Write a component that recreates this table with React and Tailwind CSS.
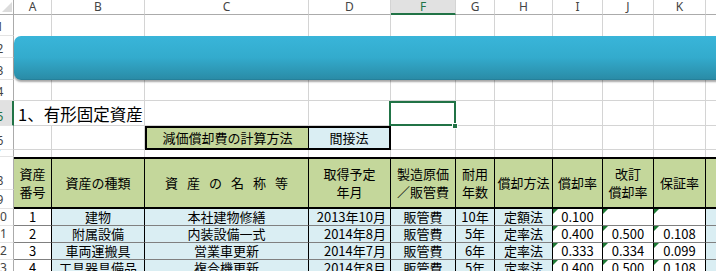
import React from 'react';

// Column widths of the sheet (column E is hidden)
const W = {
  A: 'w-[38px]',
  B: 'w-[93px]',
  C: 'w-[164px]',
  D: 'w-[82px]',
  F: 'w-[65px]',
  G: 'w-[39px]',
  H: 'w-[58px]',
  I: 'w-[50px]',
  J: 'w-[51px]',
  K: 'w-[52px]',
  L: 'w-[80px]',
};
const KEYS = ['A', 'B', 'C', 'D', 'F', 'G', 'H', 'I', 'J', 'K', 'L'];

const DATA = [
  ['1', '建物', '本社建物修繕', '2013年10月', '販管費', '10年', '定額法', '0.100', '', ''],
  ['2', '附属設備', '内装設備一式', '2014年8月', '販管費', '5年', '定率法', '0.400', '0.500', '0.108'],
  ['3', '車両運搬具', '営業車更新', '2014年7月', '販管費', '6年', '定率法', '0.333', '0.334', '0.099'],
  ['4', '工具器具備品', '複合機更新', '2014年8月', '販管費', '5年', '定率法', '0.400', '0.500', '0.108'],
];

function RowHead({ label, h, active }) {
  return (
    <div
      className={`${h} w-[14px] shrink-0 overflow-hidden flex items-end border-b border-b-[#e3e3e3] ${
        active
          ? 'border-r-2 border-r-[#217346] bg-[#e1e1e1] text-[#217346]'
          : 'border-r border-r-[#ababab] bg-white text-[#444]'
      }`}
    >
      <div className="w-[26px] -ml-[13px] shrink-0 text-center text-[12px] leading-[13px] pb-[2px] font-['Noto_Sans',sans-serif]">
        {label}
      </div>
    </div>
  );
}

function Blank({ k, bottom = true }) {
  return (
    <div
      className={`${W[k]} h-full shrink-0 border-r border-[#d4d4d4] ${bottom ? 'border-b' : ''}`}
    />
  );
}

function ErrorMark() {
  return (
    <span className="absolute left-0 top-0 w-0 h-0 border-t-[5px] border-r-[5px] border-t-[#1e7a35] border-r-transparent" />
  );
}

export default function App() {
  return (
    <div className="w-[716px] h-[271px] overflow-hidden bg-white text-black font-['Noto_Sans_CJK_JP',sans-serif]">
      {/* column letters */}
      <div className="flex h-[15px]">
        <div className="w-[14px] h-full shrink-0 border-r border-b border-[#ababab] relative overflow-hidden">
          <svg className="absolute left-[2px] top-[2px]" width="10" height="10" viewBox="0 0 10 10">
            <polygon points="10,0 10,10 0,10" fill="#dcdcdc" />
          </svg>
        </div>
        {KEYS.map((k) =>
          k === 'F' ? (
            <div
              key={k}
              className={`${W[k]} h-full shrink-0 bg-[#e1e1e1] border-r border-r-[#d4d4d4] border-b-2 border-b-[#217346] text-[#217346] flex items-center justify-center text-[12px] leading-[13px] font-['Noto_Sans',sans-serif]`}
            >
              {k}
            </div>
          ) : (
            <div
              key={k}
              className={`${W[k]} h-full shrink-0 border-r border-r-[#d4d4d4] border-b border-b-[#ababab] text-[#444] flex items-center justify-center text-[12px] leading-[14px] font-['Noto_Sans',sans-serif]`}
            >
              {k}
            </div>
          )
        )}
      </div>

      {/* row 1 */}
      <div className="flex h-[21px]">
        <RowHead label="1" h="h-[21px]" />
        {KEYS.map((k) => (
          <Blank key={k} k={k} bottom={false} />
        ))}
      </div>

      {/* rows 2-3: title banner shape */}
      <div className="flex h-[44px] relative z-10">
        <div className="flex flex-col shrink-0">
          <RowHead label="2" h="h-[22px]" />
          <RowHead label="3" h="h-[22px]" />
        </div>
        <div className="flex-1 -mr-[20px] rounded-l-[7px] bg-linear-to-b from-[#39b5d9] via-[#33abcd] to-[#2a8ca7] border-b border-[#25809a] shadow-[0_2px_2px_rgba(0,0,0,0.35)]" />
      </div>

      {/* row 4 */}
      <div className="flex h-[21px]">
        <RowHead label="4" h="h-[21px]" />
        {KEYS.map((k) => (
          <Blank key={k} k={k} />
        ))}
      </div>

      {/* row 5 */}
      <div className="flex h-[25px]">
        <RowHead label="5" h="h-[25px]" active />
        <div className="w-[131px] h-full shrink-0 border-r border-b border-[#d4d4d4] flex items-end pl-[4px] pb-[1px] text-[16.5px] leading-[20px] whitespace-nowrap">
          1、有形固定資産
        </div>
        <Blank k="C" />
        <Blank k="D" />
        <div className={`${W.F} h-full shrink-0 border-r border-b border-[#d4d4d4] relative`}>
          <div className="absolute -left-[2px] -right-[1px] top-0 -bottom-[1px] border-2 border-[#217346] z-20" />
          <div className="absolute -right-[3px] -bottom-[4px] w-[6px] h-[6px] bg-[#217346] border border-white z-30" />
        </div>
        {['G', 'H', 'I', 'J', 'K', 'L'].map((k) => (
          <Blank key={k} k={k} />
        ))}
      </div>

      {/* row 6: calculation method */}
      <div className="flex h-[24px]">
        <RowHead label="6" h="h-[24px]" />
        <Blank k="A" />
        <Blank k="B" />
        <div className="w-[246px] h-full shrink-0 flex border-2 border-black">
          <div className="w-[162px] shrink-0 bg-[#c4d79b] border-r border-black flex items-center justify-center text-[13px] leading-[16px]">
            減価償却費の計算方法
          </div>
          <div className="flex-1 bg-[#daeef3] flex items-center justify-center text-[13px] leading-[16px]">
            間接法
          </div>
        </div>
        {['F', 'G', 'H', 'I', 'J', 'K', 'L'].map((k) => (
          <Blank key={k} k={k} />
        ))}
      </div>

      {/* row 7 */}
      <div className="flex h-[7px]">
        <RowHead label="7" h="h-[7px]" />
        {KEYS.map((k) => (
          <Blank key={k} k={k} bottom={false} />
        ))}
      </div>

      {/* rows 8-9: table header */}
      <div className="flex h-[52px]">
        <div className="flex flex-col shrink-0">
          <RowHead label="8" h="h-[33px]" />
          <RowHead label="9" h="h-[19px]" />
        </div>
        <div className="flex h-full border-y-2 border-black bg-[#c4d79b] text-[13px] leading-[18px]">
          <div className={`${W.A} shrink-0 border-r border-black flex items-center justify-center text-center`}>
            資産<br />番号
          </div>
          <div className={`${W.B} shrink-0 border-r border-black flex items-center justify-center`}>
            資産の種類
          </div>
          <div className={`${W.C} shrink-0 border-r border-black flex items-center justify-center gap-[9px]`}>
            <span>資</span>
            <span>産</span>
            <span>の</span>
            <span>名</span>
            <span>称</span>
            <span>等</span>
          </div>
          <div className={`${W.D} shrink-0 border-r border-black flex items-center justify-center text-center`}>
            取得予定<br />年月
          </div>
          <div className={`${W.F} shrink-0 border-r border-black flex items-center justify-center text-center`}>
            製造原価<br />／販管費
          </div>
          <div className={`${W.G} shrink-0 border-r border-black flex items-center justify-center text-center`}>
            耐用<br />年数
          </div>
          <div className={`${W.H} shrink-0 border-r border-black flex items-center justify-center`}>
            償却方法
          </div>
          <div className={`${W.I} shrink-0 border-r border-black flex items-center justify-center`}>
            償却率
          </div>
          <div className={`${W.J} shrink-0 border-r border-black flex items-center justify-center text-center`}>
            改訂<br />償却率
          </div>
          <div className={`${W.K} shrink-0 border-r border-black flex items-center justify-center`}>
            保証率
          </div>
          <div className={`${W.L} shrink-0`} />
        </div>
      </div>

      {/* rows 10-13: asset list */}
      {DATA.map((r, i) => (
        <div key={i} className="flex h-[17px] text-[13px] leading-[16px]">
          <RowHead label={String(10 + i)} h="h-[17px]" />
          <div className={`${W.A} h-full shrink-0 bg-white border-r border-b border-r-black border-b-[#808080] flex items-center justify-center`}>
            {r[0]}
          </div>
          <div className={`${W.B} h-full shrink-0 bg-[#daeef3] border-r border-b border-r-black border-b-[#808080] flex items-center justify-center`}>
            {r[1]}
          </div>
          <div className={`${W.C} h-full shrink-0 bg-[#daeef3] border-r border-b border-r-black border-b-[#808080] flex items-center justify-center`}>
            {r[2]}
          </div>
          <div className={`${W.D} h-full shrink-0 bg-[#daeef3] border-r border-b border-r-black border-b-[#808080] flex items-center justify-end pr-[4px]`}>
            {r[3]}
          </div>
          <div className={`${W.F} h-full shrink-0 bg-[#daeef3] border-r border-b border-r-black border-b-[#808080] flex items-center justify-center`}>
            {r[4]}
          </div>
          <div className={`${W.G} h-full shrink-0 bg-[#daeef3] border-r border-b border-r-black border-b-[#808080] flex items-center justify-center`}>
            {r[5]}
          </div>
          <div className={`${W.H} h-full shrink-0 bg-[#daeef3] border-r border-b border-r-black border-b-[#808080] flex items-center justify-center`}>
            {r[6]}
          </div>
          <div className={`${W.I} h-full shrink-0 bg-white border-r border-b border-r-black border-b-[#808080] flex items-center justify-center relative`}>
            <ErrorMark />
            {r[7]}
          </div>
          <div className={`${W.J} h-full shrink-0 bg-white border-r border-b border-r-black border-b-[#808080] flex items-center justify-center relative`}>
            <ErrorMark />
            {r[8]}
          </div>
          <div className={`${W.K} h-full shrink-0 bg-white border-r border-b border-r-black border-b-[#808080] flex items-center justify-center relative`}>
            <ErrorMark />
            {r[9]}
          </div>
          <div className={`${W.L} h-full shrink-0 bg-[#daeef3] border-b border-b-[#808080]`} />
        </div>
      ))}
    </div>
  );
}
